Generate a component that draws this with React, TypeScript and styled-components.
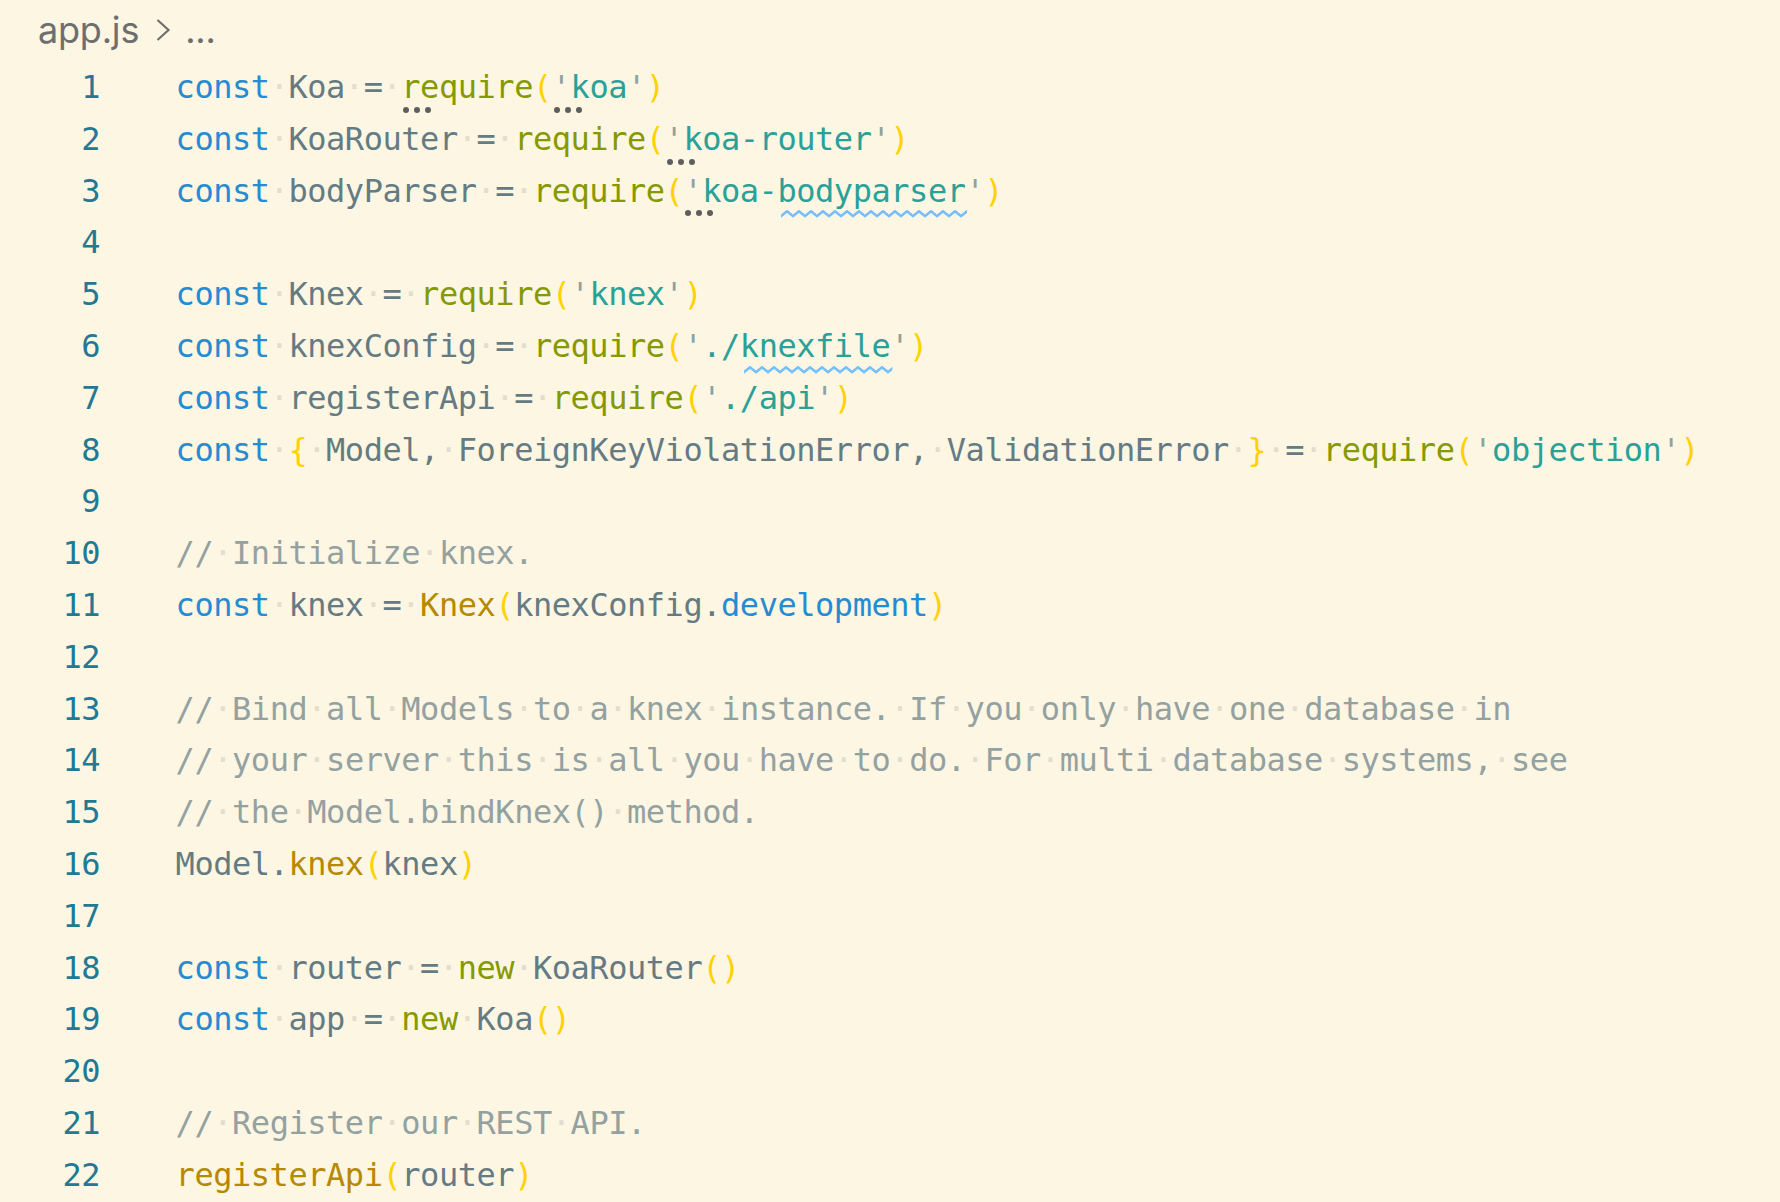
import React, { useId } from "react";
import styled, { createGlobalStyle } from "styled-components";

const COLORS = {
  bg: "#fdf6e3",
  kw: "#268bd2",
  id: "#657b83",
  fn: "#859900",
  str: "#2aa198",
  q: "#8ea39f",
  br: "#ffd200",
  cm: "#93a1a1",
  call: "#b58900",
  prop: "#268bd2",
  op: "#657b83",
  ws: "#e2ddcd",
  lineNo: "#237893",
  crumb: "#6e6e6e",
  hint: "#5e5e5e",
  info: "#75beff",
};

type Kind = keyof typeof COLORS;

type Tok = { k: Kind; t: string; hint?: boolean; squiggle?: boolean };

const t = (k: Kind, text: string, extra: Partial<Tok> = {}): Tok => ({ k, t: text, ...extra });

const LINES: Tok[][] = [
  [t("kw", "const"), t("id", " Koa "), t("op", "= "), t("fn", "r", { hint: true }), t("fn", "equire"), t("br", "("), t("q", "'", { hint: true }), t("str", "koa"), t("q", "'"), t("br", ")")],
  [t("kw", "const"), t("id", " KoaRouter "), t("op", "= "), t("fn", "require"), t("br", "("), t("q", "'", { hint: true }), t("str", "koa-router"), t("q", "'"), t("br", ")")],
  [t("kw", "const"), t("id", " bodyParser "), t("op", "= "), t("fn", "require"), t("br", "("), t("q", "'", { hint: true }), t("str", "koa-"), t("str", "bodyparser", { squiggle: true }), t("q", "'"), t("br", ")")],
  [],
  [t("kw", "const"), t("id", " Knex "), t("op", "= "), t("fn", "require"), t("br", "("), t("q", "'"), t("str", "knex"), t("q", "'"), t("br", ")")],
  [t("kw", "const"), t("id", " knexConfig "), t("op", "= "), t("fn", "require"), t("br", "("), t("q", "'"), t("str", "./"), t("str", "knexfile", { squiggle: true }), t("q", "'"), t("br", ")")],
  [t("kw", "const"), t("id", " registerApi "), t("op", "= "), t("fn", "require"), t("br", "("), t("q", "'"), t("str", "./api"), t("q", "'"), t("br", ")")],
  [t("kw", "const"), t("id", " "), t("br", "{"), t("id", " Model, ForeignKeyViolationError, ValidationError "), t("br", "}"), t("op", " = "), t("fn", "require"), t("br", "("), t("q", "'"), t("str", "objection"), t("q", "'"), t("br", ")")],
  [],
  [t("cm", "// Initialize knex.")],
  [t("kw", "const"), t("id", " knex "), t("op", "= "), t("call", "Knex"), t("br", "("), t("id", "knexConfig."), t("prop", "development"), t("br", ")")],
  [],
  [t("cm", "// Bind all Models to a knex instance. If you only have one database in")],
  [t("cm", "// your server this is all you have to do. For multi database systems, see")],
  [t("cm", "// the Model.bindKnex() method.")],
  [t("id", "Model."), t("call", "knex"), t("br", "("), t("id", "knex"), t("br", ")")],
  [],
  [t("kw", "const"), t("id", " router "), t("op", "= "), t("fn", "new"), t("id", " KoaRouter"), t("br", "()")],
  [t("kw", "const"), t("id", " app "), t("op", "= "), t("fn", "new"), t("id", " Koa"), t("br", "()")],
  [],
  [t("cm", "// Register our REST API.")],
  [t("call", "registerApi"), t("br", "("), t("id", "router"), t("br", ")")],
];

const GlobalStyle = createGlobalStyle`
  html, body {
    margin: 0;
    padding: 0;
    background: ${COLORS.bg};
  }
  body {
    min-height: 1202px;
  }
`;

const Page = styled.div`
  width: 1780px;
  min-height: 1202px;
  background: ${COLORS.bg};
  display: flex;
  flex-direction: column;
`;

const Breadcrumbs = styled.nav`
  height: 62px;
  display: flex;
  align-items: flex-start;
  padding-left: 38px;
  font-family: Inter, "Liberation Sans", sans-serif;
  font-size: 36px;
  line-height: 60px;
  color: ${COLORS.crumb};
  letter-spacing: -0.2px;
`;

const CrumbItem = styled.span`
  display: inline-block;
`;

const CrumbSep = styled.span`
  display: inline-flex;
  align-items: center;
  height: 60px;
  margin: 0 13px 0 15px;
`;

const Editor = styled.div`
  display: flex;
  flex-direction: column;
  font-family: "DejaVu Sans Mono", "Liberation Mono", monospace;
  font-size: 32px;
  letter-spacing: -0.46px;
  white-space: pre;
`;

const Row = styled.div`
  display: grid;
  grid-template-columns: 100px 1fr;
  height: 51.8px;
  line-height: 51.8px;
`;

const LineNumber = styled.div`
  color: ${COLORS.lineNo};
  text-align: right;
`;

const Code = styled.div`
  padding-left: 75.6px;
`;

const Tk = styled.span<{ $kind: Kind }>`
  color: ${(p) => COLORS[p.$kind]};
`;

const Ws = styled.span`
  color: ${COLORS.ws};
`;

const Anchor = styled.span`
  position: relative;
  display: inline-block;
`;

const HintDots = styled.span`
  position: absolute;
  left: 2px;
  bottom: 1px;
  display: flex;
  gap: 5px;
  pointer-events: none;
`;

const HintDot = styled.span`
  width: 6px;
  height: 6px;
  border-radius: 50%;
  background: ${COLORS.hint};
`;

const SquiggleSvg = styled.svg`
  position: absolute;
  left: 4px;
  bottom: -1px;
  width: calc(100% - 2px);
  height: 8px;
  overflow: visible;
  pointer-events: none;
`;

function renderText(text: string) {
  return text.split(/( )/).map((part, i) =>
    part === " " ? <Ws key={i}>·</Ws> : <React.Fragment key={i}>{part}</React.Fragment>
  );
}

function Squiggle() {
  const id = useId().replace(/:/g, "");
  return (
    <SquiggleSvg aria-hidden="true">
      <defs>
        <pattern id={`sq${id}`} width="12" height="8" patternUnits="userSpaceOnUse">
          <path d="M-1 7 L6 1.3 L13 7" fill="none" stroke={COLORS.info} strokeWidth="2.6" strokeLinejoin="miter" />
        </pattern>
      </defs>
      <rect x="0" y="0" width="100%" height="8" fill={`url(#sq${id})`} />
    </SquiggleSvg>
  );
}

function Token({ tok }: { tok: Tok }) {
  const body = <Tk $kind={tok.k}>{renderText(tok.t)}</Tk>;
  if (tok.hint) {
    return (
      <Anchor>
        {body}
        <HintDots aria-hidden="true">
          <HintDot />
          <HintDot />
          <HintDot />
        </HintDots>
      </Anchor>
    );
  }
  if (tok.squiggle) {
    return (
      <Anchor>
        {body}
        <Squiggle />
      </Anchor>
    );
  }
  return body;
}

function Chevron() {
  return (
    <svg width="18" height="26" viewBox="0 0 18 26" aria-hidden="true">
      <path d="M3.5 3 L14.5 13 L3.5 23" fill="none" stroke={COLORS.crumb} strokeWidth="2.2" />
    </svg>
  );
}

export default function App() {
  return (
    <Page>
      <GlobalStyle />
      <Breadcrumbs>
        <CrumbItem>app.js</CrumbItem>
        <CrumbSep>
          <Chevron />
        </CrumbSep>
        <CrumbItem>...</CrumbItem>
      </Breadcrumbs>
      <Editor>
        {LINES.map((line, i) => (
          <Row key={i}>
            <LineNumber>{i + 1}</LineNumber>
            <Code>
              {line.map((tok, j) => (
                <Token key={j} tok={tok} />
              ))}
            </Code>
          </Row>
        ))}
      </Editor>
    </Page>
  );
}
